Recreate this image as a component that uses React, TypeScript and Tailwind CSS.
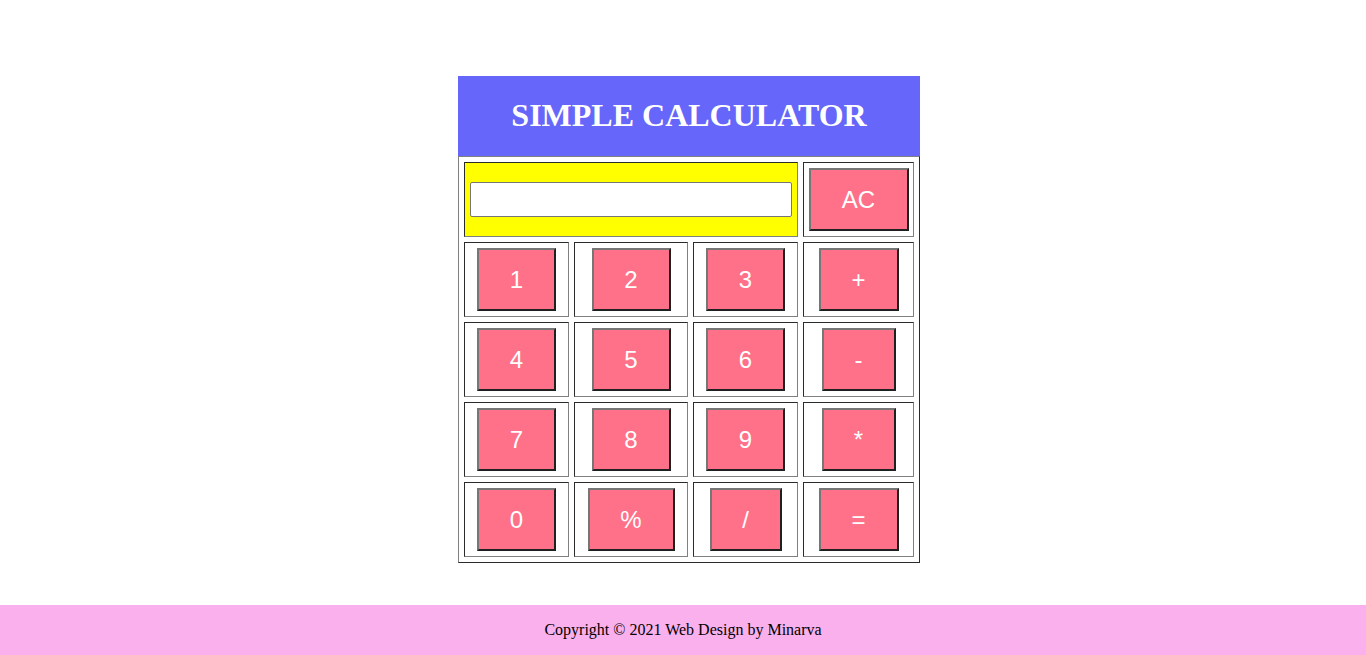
import React from 'react';

const cell =
  'flex items-center justify-center border border-t-[#2b2b2b] border-l-[#2b2b2b] border-r-[#808080] border-b-[#808080]';

const btn =
  'h-[63px] bg-[#ff7189] text-white text-[24px] border-2 border-t-[#767676] border-l-[#767676] border-r-[#202020] border-b-[#202020] flex items-center justify-center';

const keys = [
  ['1', 'w-[79px]'], ['2', 'w-[79px]'], ['3', 'w-[79px]'], ['+', 'w-[80px]'],
  ['4', 'w-[79px]'], ['5', 'w-[79px]'], ['6', 'w-[79px]'], ['-', 'w-[74px]'],
  ['7', 'w-[79px]'], ['8', 'w-[79px]'], ['9', 'w-[79px]'], ['*', 'w-[74px]'],
  ['0', 'w-[79px]'], ['%', 'w-[87px]'], ['/', 'w-[72px]'], ['=', 'w-[80px]'],
];

export default function App() {
  return (
    <div className="min-h-screen bg-white flex flex-col" style={{ fontFamily: '"Liberation Sans", Arial, sans-serif' }}>
      <div className="pt-[76px] pl-[12px] flex justify-center">
        <div className="w-[462px]">
          {/* title */}
          <div className="h-[80px] pb-[2px] bg-[#6666fa] flex items-center justify-center">
            <h1 className="text-white text-[32px] font-bold font-['Liberation_Serif',serif] leading-none">
              SIMPLE CALCULATOR
            </h1>
          </div>

          {/* keypad table */}
          <div className="border border-t-[#808080] border-l-[#808080] border-r-[#2b2b2b] border-b-[#2b2b2b] p-[5px] grid grid-cols-[105px_114px_105px_111px] auto-rows-[75px] gap-[5px]">
            <div className={`${cell} col-span-3 bg-[#ffff00]`}>
              <input
                type="text"
                className="w-[322px] h-[35px] bg-white border border-[#767676] rounded-[2px] outline-none px-1"
              />
            </div>
            <div className={cell}>
              <button className={`${btn} w-[100px]`}>AC</button>
            </div>
            {keys.map(([k, w]) => (
              <div key={k} className={cell}>
                <button className={`${btn} ${w}`}>{k}</button>
              </div>
            ))}
          </div>
        </div>
      </div>

      <footer className="mt-[42px] h-[50px] bg-[#fab0ed] flex items-center justify-center">
        <p className="text-black text-[16px] font-['Liberation_Serif',serif]">
          Copyright © 2021 Web Design by Minarva
        </p>
      </footer>
    </div>
  );
}
